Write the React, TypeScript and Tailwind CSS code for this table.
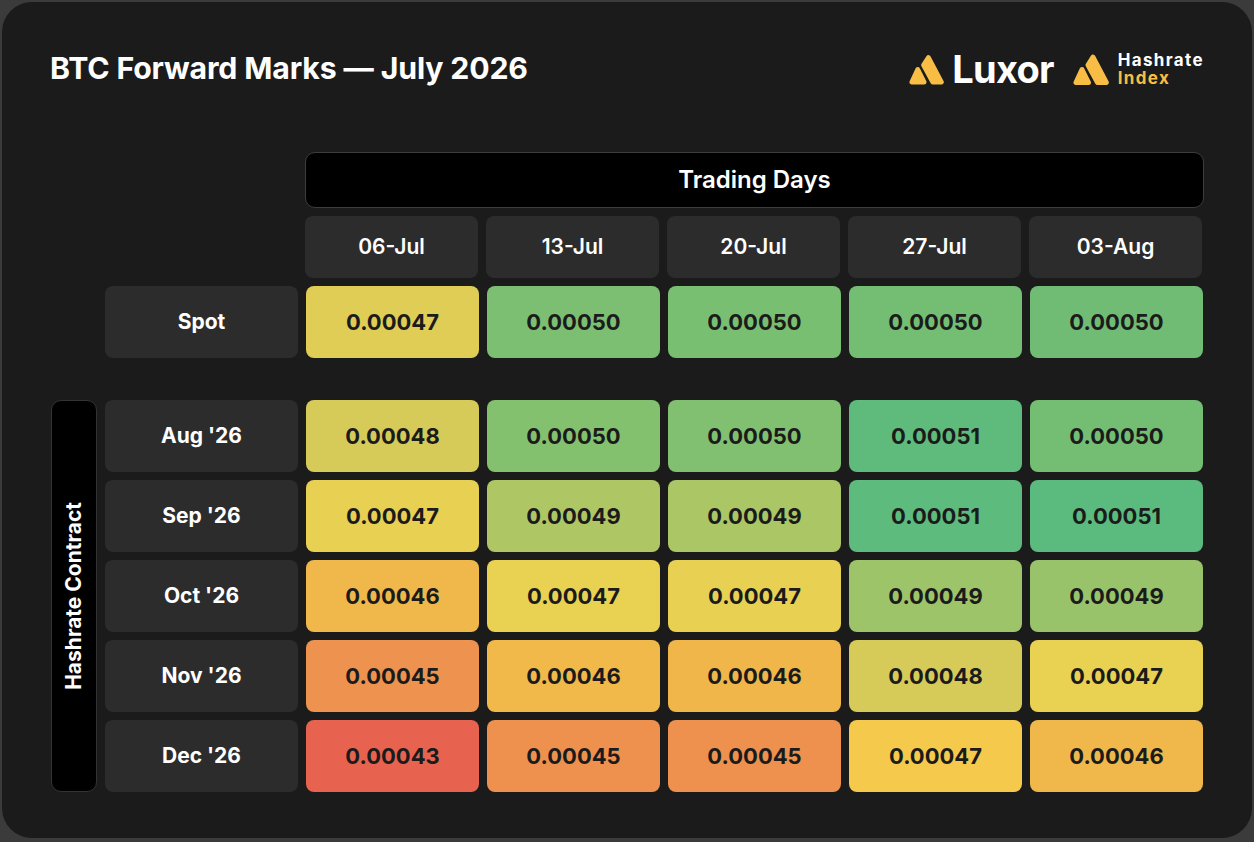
const days = ['06-Jul', '13-Jul', '20-Jul', '27-Jul', '03-Aug']

type Cell = { value: string; color: string }

const spot: Cell[] = [
  { value: '0.00047', color: 'bg-[#dfcd55]' },
  { value: '0.00050', color: 'bg-[#7cbf72]' },
  { value: '0.00050', color: 'bg-[#79bf72]' },
  { value: '0.00050', color: 'bg-[#74be74]' },
  { value: '0.00050', color: 'bg-[#70bc75]' }
]

const contracts: { label: string; cells: Cell[] }[] = [
  {
    label: "Aug '26",
    cells: [
      { value: '0.00048', color: 'bg-[#d6cb59]' },
      { value: '0.00050', color: 'bg-[#84c16f]' },
      { value: '0.00050', color: 'bg-[#80c070]' },
      { value: '0.00051', color: 'bg-[#5ebb7c]' },
      { value: '0.00050', color: 'bg-[#74be74]' }
    ]
  },
  {
    label: "Sep '26",
    cells: [
      { value: '0.00047', color: 'bg-[#e8d052]' },
      { value: '0.00049', color: 'bg-[#aec764]' },
      { value: '0.00049', color: 'bg-[#aac665]' },
      { value: '0.00051', color: 'bg-[#5dbb7d]' },
      { value: '0.00051', color: 'bg-[#5bbb7e]' }
    ]
  },
  {
    label: "Oct '26",
    cells: [
      { value: '0.00046', color: 'bg-[#f0b84a]' },
      { value: '0.00047', color: 'bg-[#e9d152]' },
      { value: '0.00047', color: 'bg-[#e8d152]' },
      { value: '0.00049', color: 'bg-[#9dc469]' },
      { value: '0.00049', color: 'bg-[#99c36a]' }
    ]
  },
  {
    label: "Nov '26",
    cells: [
      { value: '0.00045', color: 'bg-[#ee924f]' },
      { value: '0.00046', color: 'bg-[#f1b84a]' },
      { value: '0.00046', color: 'bg-[#f0b649]' },
      { value: '0.00048', color: 'bg-[#d6cb59]' },
      { value: '0.00047', color: 'bg-[#e9d152]' }
    ]
  },
  {
    label: "Dec '26",
    cells: [
      { value: '0.00043', color: 'bg-[#e8634f]' },
      { value: '0.00045', color: 'bg-[#ee914f]' },
      { value: '0.00045', color: 'bg-[#ee904e]' },
      { value: '0.00047', color: 'bg-[#f5c94c]' },
      { value: '0.00046', color: 'bg-[#f0b84a]' }
    ]
  }
]

function Mark({ className }: { className?: string }) {
  return (
    <svg viewBox="0 0 36 31" className={className} fill="#f7bd45" stroke="#f7bd45" strokeWidth={5} strokeLinejoin="round">
      <path d="M20 3.2 L33.3 28.5 L24.5 28.5 L15 11 Z" />
      <path d="M9 15.5 L3 28.5 L15.5 28.5 Z" />
    </svg>
  )
}

function Logos() {
  return (
    <div className="flex items-center">
      <Mark className="w-[35px] h-[31px]" />
      <span className="ml-[8px] text-[38px] leading-none font-bold text-white tracking-[-0.02em]">Luxor</span>
      <Mark className="ml-[19px] w-[36px] h-[31px]" />
      <div className="ml-[9px] flex flex-col text-[17px] leading-[18px] font-bold tracking-[0.08em]">
        <span className="block text-white">Hashrate</span>
        <span className="block text-[#f7bd45]">Index</span>
      </div>
    </div>
  )
}

function ValueCell({ cell }: { cell: Cell }) {
  return (
    <div className={`${cell.color} w-[173px] h-[72px] rounded-lg flex items-center justify-center text-[22px] font-bold text-[#1b1b1b]`}>
      {cell.value}
    </div>
  )
}

function Label({ children }: { children: string }) {
  return (
    <div className="bg-[#2c2c2c] w-[193px] h-[72px] rounded-lg flex items-center justify-center text-[21px] font-bold text-white">
      {children}
    </div>
  )
}

export default function App() {
  return (
    <div className="w-[1254px] h-[842px] bg-[#3b3b3b] pt-[2px] pl-[2px] pr-[2px] pb-[4px] font-['Inter',sans-serif]">
      <div className="h-full rounded-[30px] bg-[#1b1b1b] px-[48px] pt-[41px]">
        <header className="flex items-center justify-between h-[52px]">
          <h1 className="text-[30.25px] font-bold text-white tracking-[-0.005em]">BTC Forward Marks — July 2026</h1>
          <Logos />
        </header>

        <div className="mt-[57px] flex flex-col gap-[8px] pl-[1px]">
          <div className="ml-[254px] h-[56px] bg-black border border-[#3d3d3d] rounded-[10px] flex items-center justify-center text-[24px] font-semibold text-white">
            Trading Days
          </div>

          <div className="ml-[254px] flex gap-[8px]">
            {days.map((day) => (
              <div
                key={day}
                className="w-[173px] h-[62px] bg-[#2c2c2c] rounded-lg flex items-center justify-center text-[21px] font-semibold text-white"
              >
                {day}
              </div>
            ))}
          </div>

          <div className="ml-[54px] flex gap-[8px]">
            <Label>Spot</Label>
            {spot.map((cell, i) => (
              <ValueCell key={i} cell={cell} />
            ))}
          </div>

          <div className="mt-[34px] flex gap-[8px]">
            <div className="w-[46px] bg-black border border-[#333333] rounded-[10px] flex items-center justify-center">
              <span className="[writing-mode:vertical-rl] rotate-180 text-[21px] font-bold text-white">Hashrate Contract</span>
            </div>
            <div className="flex flex-col gap-[8px]">
              {contracts.map((row) => (
                <div key={row.label} className="flex gap-[8px]">
                  <Label>{row.label}</Label>
                  {row.cells.map((cell, i) => (
                    <ValueCell key={i} cell={cell} />
                  ))}
                </div>
              ))}
            </div>
          </div>
        </div>
      </div>
    </div>
  )
}
